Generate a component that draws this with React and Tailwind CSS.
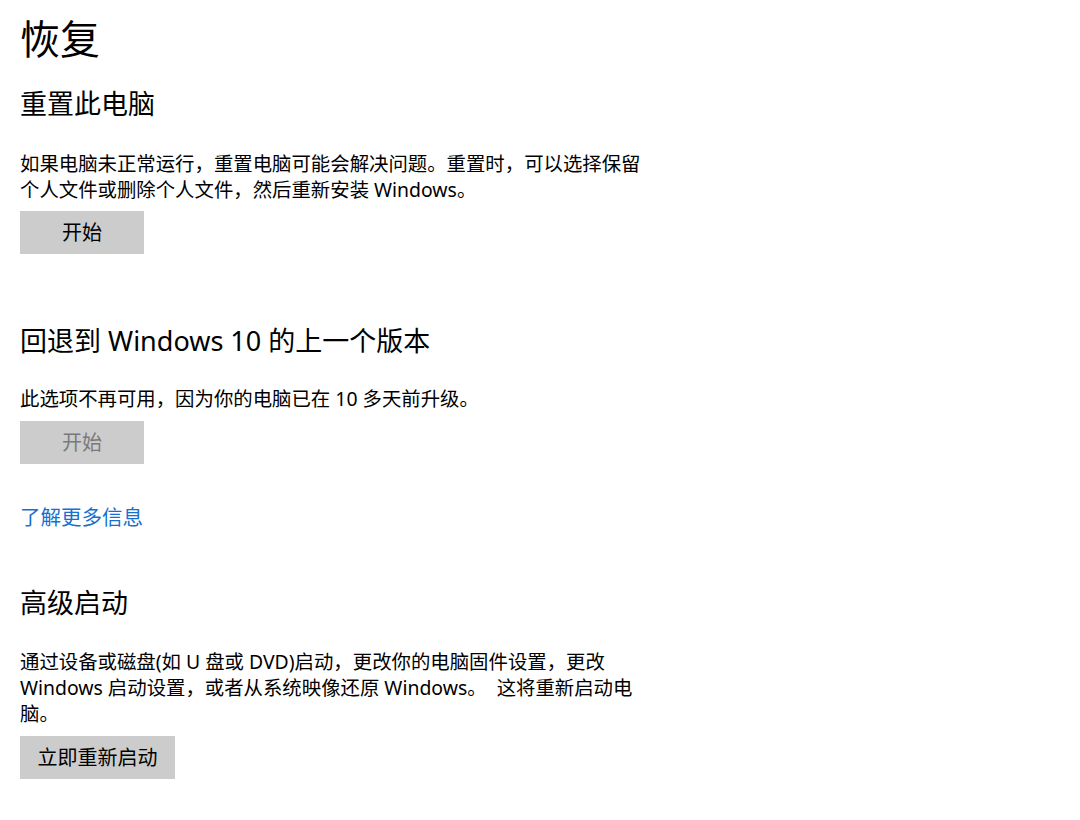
import React from 'react';

const sections = [
  {
    id: 'reset',
    title: '重置此电脑',
    text: '如果电脑未正常运行，重置电脑可能会解决问题。重置时，可以选择保留个人文件或删除个人文件，然后重新安装 Windows。',
    button: '开始',
  },
];

function Button({ children, disabled, wide }) {
  return (
    <button
      type="button"
      disabled={disabled}
      className={`flex h-[43px] items-center justify-center bg-[#cccccc] text-[20px] ${
        wide ? 'w-[155px]' : 'w-[124px]'
      } ${disabled ? 'text-[#7a7a7a]' : 'text-black'}`}
    >
      {children}
    </button>
  );
}

export default function App() {
  return (
    <div className="min-h-[820px] w-[1080px] bg-white px-5 pt-[13px] font-['Noto_Sans','Noto_Sans_CJK_SC',sans-serif] text-black">
      <h1 className="text-[40px] leading-[52px]">恢复</h1>

      {sections.map((s) => (
        <section key={s.id}>
          <h2 className="mt-[21px] text-[27px] leading-[36px]">{s.title}</h2>
          <p className="mt-[29px] w-[626px] text-[19.4px] leading-[26px]">{s.text}</p>
          <div className="mt-[8px]">
            <Button>{s.button}</Button>
          </div>
        </section>
      ))}

      <section>
        <h2 className="mt-[69px] text-[27px] leading-[36px]">回退到 Windows 10 的上一个版本</h2>
        <p className="mt-[27px] w-[626px] text-[19.4px] leading-[26px]">
          此选项不再可用，因为你的电脑已在 10 多天前升级。
        </p>
        <div className="mt-[9px]">
          <Button disabled>开始</Button>
        </div>
        <a href="#" className="mt-[40px] block w-fit text-[20.5px] leading-[26px] text-[#1570cf]">
          了解更多信息
        </a>
      </section>

      <section>
        <h2 className="mt-[55px] text-[27px] leading-[36px]">高级启动</h2>
        <p className="mt-[28px] w-[626px] text-[19.4px] leading-[26px]">
          通过设备或磁盘(如 U 盘或 DVD)启动，更改你的电脑固件设置，更改 Windows 启动设置，或者从系统映像还原 Windows。 &nbsp;这将重新启动电脑。
        </p>
        <div className="mt-[9px]">
          <Button wide>立即重新启动</Button>
        </div>
      </section>
    </div>
  );
}
